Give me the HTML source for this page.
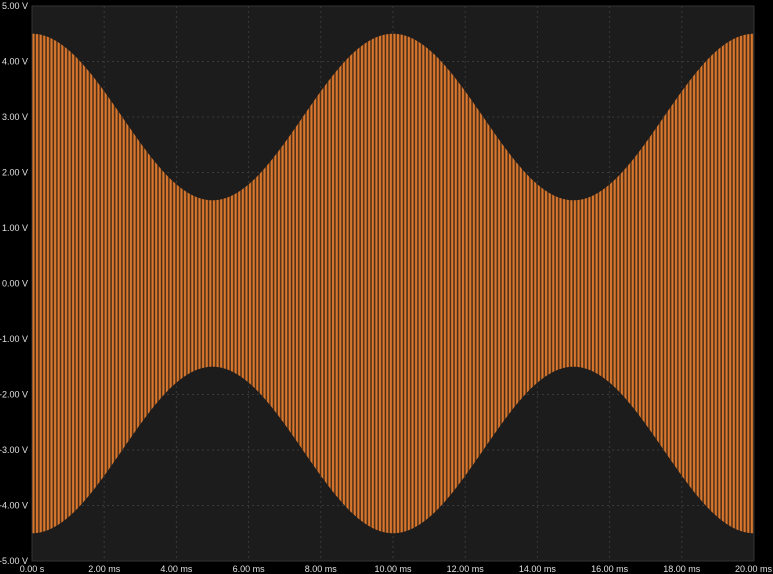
<!DOCTYPE html>
<html><head><style>
html,body{margin:0;padding:0;background:#000;width:773px;height:574px;overflow:hidden;font-family:"Liberation Sans",sans-serif}
</style></head><body>
<svg id="s" width="773" height="574" xmlns="http://www.w3.org/2000/svg" style="display:block">
<defs>
<pattern id="st" patternUnits="userSpaceOnUse" x="32" y="0" width="3.61" height="10">
<rect x="0" y="0" width="3.61" height="10" fill="#4a2e18"/>
<rect x="0.4" y="0" width="2.1" height="10" fill="#d9772e"/>
</pattern>
</defs>
<rect x="0" y="0" width="773" height="574" fill="#000"/>
<rect x="32" y="6" width="722" height="555" fill="#1c1c1d"/>
<g id="grid" stroke="#3a3a3a" stroke-width="1" stroke-dasharray="2,3"></g>
<path id="env" fill="url(#st)"/>
<rect x="32" y="6" width="722" height="555" fill="none" stroke="#333" stroke-width="1"/>
<g id="lab" fill="#e0e0e0" font-size="9"></g>
</svg>
<script>
(function(){
var ns="http://www.w3.org/2000/svg";
function X(ms){return 32+ms*36.1}
function Y(v){return 283.5-v*55.5}
var g=document.getElementById('grid'),lab=document.getElementById('lab');
for(var i=1;i<10;i++){var l=document.createElementNS(ns,'line');l.setAttribute('x1',X(i*2));l.setAttribute('x2',X(i*2));l.setAttribute('y1',6);l.setAttribute('y2',561);g.appendChild(l);}
for(var v=-4;v<=4;v++){var l2=document.createElementNS(ns,'line');l2.setAttribute('x1',32);l2.setAttribute('x2',754);l2.setAttribute('y1',Y(v));l2.setAttribute('y2',Y(v));g.appendChild(l2);}
for(var v2=-5;v2<=5;v2++){var t=document.createElementNS(ns,'text');t.setAttribute('x',28);t.setAttribute('y',Y(v2)+3);t.setAttribute('text-anchor','end');t.textContent=v2.toFixed(2)+' V';lab.appendChild(t);}
for(var j=0;j<=10;j++){var t2=document.createElementNS(ns,'text');var x=X(j*2);var a='middle';if(j==10){x=772;a='end'}t2.setAttribute('x',x);t2.setAttribute('y',572);t2.setAttribute('text-anchor',a);t2.textContent=j==0?'0.00 s':(j*2).toFixed(2)+' ms';lab.appendChild(t2);}
var upper=[],lower=[];
for(var k=0;k<=400;k++){var ms=k*20/400;var amp=3+1.5*Math.cos(2*Math.PI*ms/10);upper.push(X(ms).toFixed(2)+','+Y(amp).toFixed(2));lower.unshift(X(ms).toFixed(2)+','+Y(-amp).toFixed(2));}
document.getElementById('env').setAttribute('d','M'+upper.join(' L')+' L'+lower.join(' L')+' Z');
})();
</script>
</body></html>
